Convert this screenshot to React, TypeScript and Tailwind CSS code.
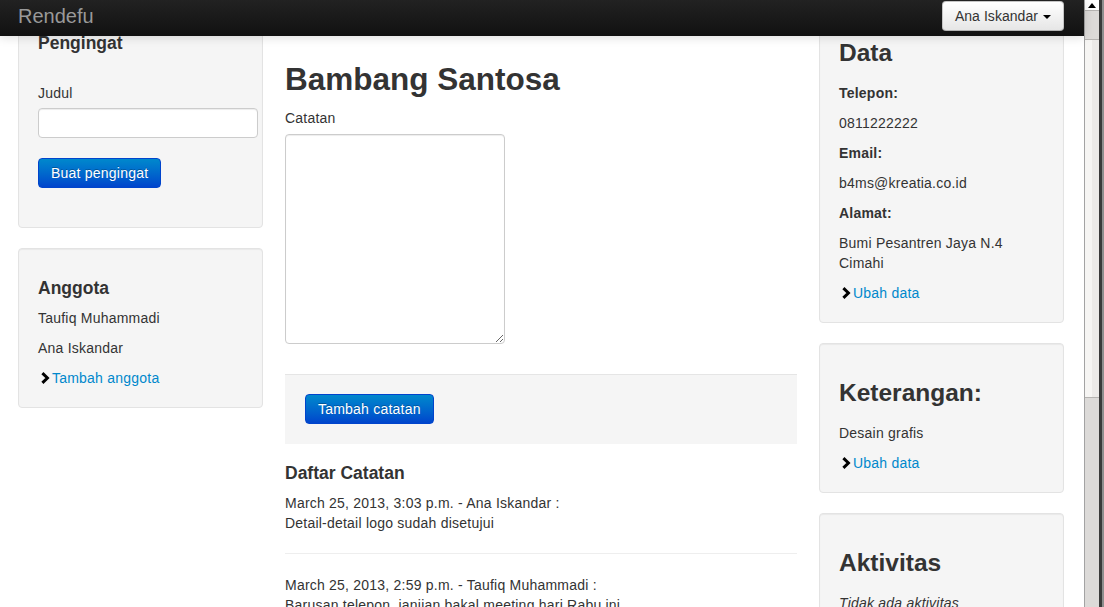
import type { ReactNode } from 'react';

function Chevron() {
  return (
    <svg width="14" height="14" viewBox="0 0 14 14" className="inline-block shrink-0">
      <path d="M4.4 2.2 L9.4 7 L4.4 11.8" fill="none" stroke="#000" strokeWidth="3" strokeLinejoin="miter" />
    </svg>
  );
}

function LinkRow({ label }: { label: string }) {
  return (
    <p className="flex items-center">
      <Chevron />
      <a href="#" className="text-[#0088cc]">
        {label}
      </a>
    </p>
  );
}

function Well({ children, className = '' }: { children: ReactNode; className?: string }) {
  return (
    <div
      className={`rounded-[4px] border border-[#e3e3e3] bg-[#f5f5f5] px-[19px] pt-[19px] shadow-[inset_0_1px_1px_rgba(0,0,0,0.05)] ${className}`}
    >
      {children}
    </div>
  );
}

function PrimaryButton({ children }: { children: ReactNode }) {
  return (
    <button className="h-[30px] rounded-[4px] border border-[#0044cc] bg-linear-to-b from-[#0088cc] to-[#0044cc] px-[12px] text-[14px] leading-[20px] text-white [text-shadow:0_-1px_0_rgba(0,0,0,0.25)]">
      {children}
    </button>
  );
}

function Scrollbar() {
  return (
    <div className="flex h-full w-[20px]">
      <div className="flex w-[15px] flex-col border-l border-[#a3a3a3]">
        <div className="flex h-[10px] items-center justify-center bg-white">
          <div className="border-x-[4px] border-b-[5px] border-x-transparent border-b-black" />
        </div>
        <div className="h-[30px] border-y border-[#b5b3b1] bg-[#dcdad8]" />
        <div className="flex h-[357px] bg-[#eceae8]">
          <div className="w-[7px] bg-[#f6f5f3]" />
          <div className="flex-1" />
        </div>
        <div className="flex-1 border-t border-[#b5b3b1] bg-[#dcdad8]" />
      </div>
      <div className="w-[3px] bg-[#3a3a3a]" />
      <div className="w-[2px] bg-[#8e8e8e]" />
    </div>
  );
}

export default function App() {
  return (
    <div className="flex h-[607px] w-[1104px] overflow-hidden bg-white font-['Liberation_Sans',Arial,sans-serif] text-[14px] leading-[20px] tracking-[0.22px] text-[#333]">
      <div className="flex w-[1084px] flex-col">
        {/* Navbar */}
        <div className="relative z-10 flex h-[36px] shrink-0 items-start justify-between bg-linear-to-b from-[#222] to-[#111] pl-[18px] pr-[20px] shadow-[0_1px_10px_rgba(0,0,0,0.15)]">
          <a href="#" className="mt-[5px] text-[20px] leading-[22px] tracking-normal text-[#999]">
            Rendefu
          </a>
          <button className="mt-[1px] flex h-[30px] items-center rounded-[4px] border border-[#c5c5c5] border-b-[#b3b3b3] bg-linear-to-b from-white to-[#e6e6e6] px-[12px] text-[14px] leading-[20px] tracking-[0.05px] text-[#333]">
            Ana Iskandar
            <span className="ml-[5px] mt-[1px] border-x-[4px] border-t-[4px] border-x-transparent border-t-black" />
          </button>
        </div>

        {/* Scrolled content */}
        <div className="flex-1 overflow-hidden">
          <div className="-mt-[33px] flex gap-[22px] pl-[18px]">
            {/* Left column */}
            <div className="flex w-[245px] flex-col gap-[20px]">
              <Well className="pb-[39px]">
                <h4 className="my-[10px] text-[17.5px] font-bold leading-[20px] tracking-normal">Pengingat</h4>
                <label className="mb-[5px] mt-[30px] block">Judul</label>
                <input
                  type="text"
                  className="block h-[30px] w-[220px] rounded-[4px] border border-[#ccc] bg-white px-[6px] shadow-[inset_0_1px_1px_rgba(0,0,0,0.075)]"
                />
                <div className="mt-[20px]">
                  <PrimaryButton>Buat pengingat</PrimaryButton>
                </div>
              </Well>
              <Well className="pb-[19px]">
                <h4 className="my-[10px] text-[17.5px] font-bold leading-[20px] tracking-normal">Anggota</h4>
                <div className="flex flex-col gap-[10px]">
                  <p>Taufiq Muhammadi</p>
                  <p>Ana Iskandar</p>
                  <LinkRow label="Tambah anggota" />
                </div>
              </Well>
            </div>

            {/* Center column */}
            <div className="w-[512px]">
              <h2 className="mb-[9px] mt-[56px] text-[31.5px] font-bold leading-[40px] tracking-normal">
                Bambang Santosa
              </h2>
              <label className="mb-[6px] block">Catatan</label>
              <textarea className="block h-[210px] w-[220px] rounded-[4px] border border-[#ccc] bg-white shadow-[inset_0_1px_1px_rgba(0,0,0,0.075)]" />
              <div className="mt-[30px] border-t border-[#e5e5e5] bg-[#f5f5f5] px-[20px] pb-[20px] pt-[19px]">
                <PrimaryButton>Tambah catatan</PrimaryButton>
              </div>
              <h4 className="mb-[10px] mt-[19px] text-[17.5px] font-bold leading-[20px] tracking-normal">
                Daftar Catatan
              </h4>
              <p>
                March 25, 2013, 3:03 p.m. - Ana Iskandar :<br />
                Detail-detail logo sudah disetujui
              </p>
              <hr className="mb-[21px] mt-[20px] border-t border-[#eee]" />
              <p>
                March 25, 2013, 2:59 p.m. - Taufiq Muhammadi :<br />
                Barusan telepon, janjian bakal meeting hari Rabu ini
              </p>
            </div>

            {/* Right column */}
            <div className="flex w-[245px] flex-col gap-[20px]">
              <Well className="pb-[19px]">
                <h3 className="my-[10px] text-[24.5px] font-bold leading-[40px] tracking-normal">Data</h3>
                <div className="flex flex-col gap-[10px]">
                  <p className="font-bold">Telepon:</p>
                  <p>0811222222</p>
                  <p className="font-bold">Email:</p>
                  <p>b4ms@kreatia.co.id</p>
                  <p className="font-bold">Alamat:</p>
                  <p>
                    Bumi Pesantren Jaya N.4
                    <br />
                    Cimahi
                  </p>
                  <LinkRow label="Ubah data" />
                </div>
              </Well>
              <Well className="pb-[19px]">
                <h3 className="my-[10px] text-[24.5px] font-bold leading-[40px] tracking-normal">Keterangan:</h3>
                <div className="flex flex-col gap-[10px]">
                  <p>Desain grafis</p>
                  <LinkRow label="Ubah data" />
                </div>
              </Well>
              <Well className="pb-[19px]">
                <h3 className="my-[10px] text-[24.5px] font-bold leading-[40px] tracking-normal">Aktivitas</h3>
                <p className="italic">Tidak ada aktivitas</p>
              </Well>
            </div>
          </div>
        </div>
      </div>
      <Scrollbar />
    </div>
  );
}
